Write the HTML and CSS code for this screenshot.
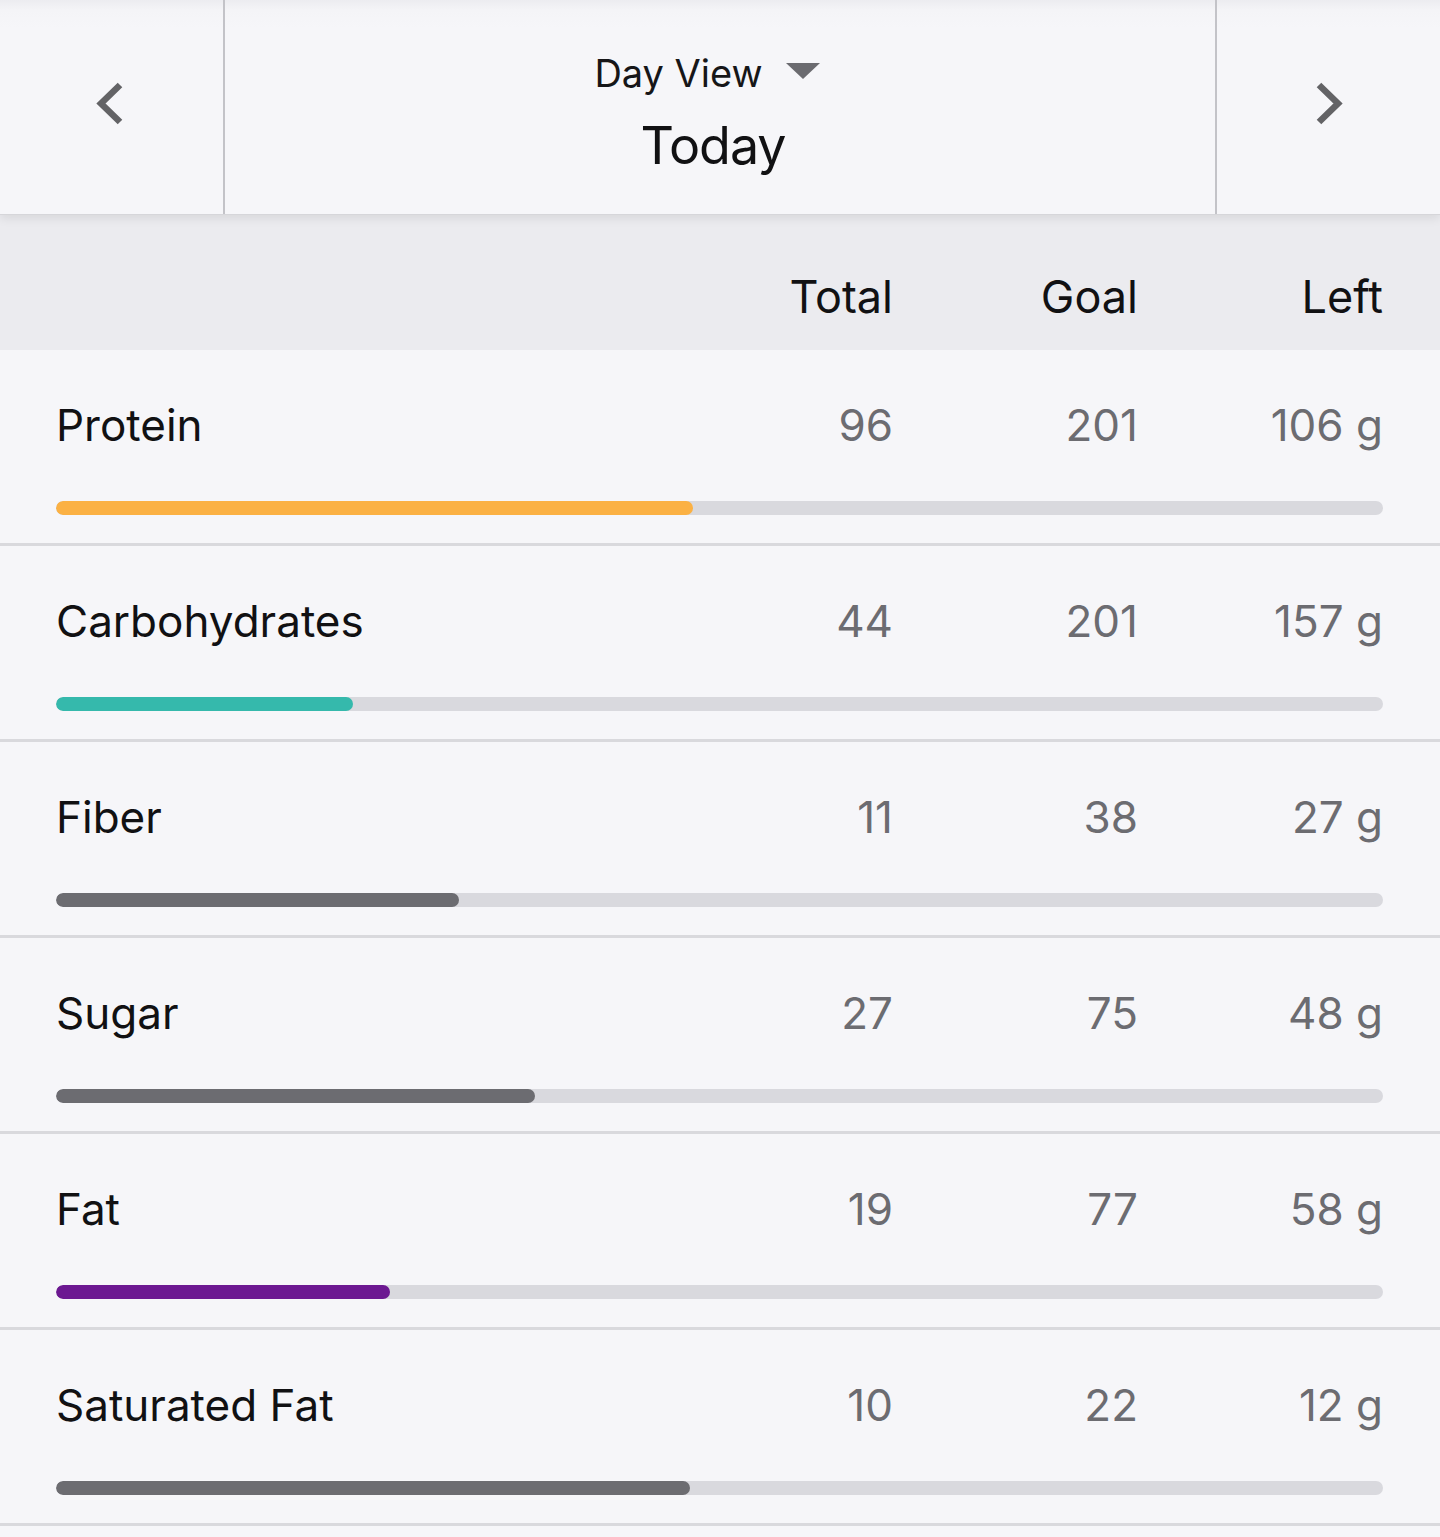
FILE: index.html
```html
<!DOCTYPE html>
<html lang="en">
<head>
<meta charset="utf-8">
<title>Nutrients</title>
<link rel="stylesheet" href="styles.css">
</head>
<body>
<div class="page">
  <header class="nav">
    <button class="nav-btn nav-prev" aria-label="Previous">
      <svg width="40" height="50" viewBox="0 0 40 50"><path d="M24 6 L5 24.5 L24 43" fill="none" stroke="#636366" stroke-width="6.5" stroke-linecap="butt" stroke-linejoin="miter"/></svg>
    </button>
    <div class="nav-center">
      <div class="view-select"><span>Day View</span><svg class="caret" width="34" height="16" viewBox="0 0 34 16"><path d="M0 0 H34 L17 16 Z" fill="#6b6b70"/></svg></div>
      <div class="nav-title">Today</div>
    </div>
    <button class="nav-btn nav-next" aria-label="Next">
      <svg width="40" height="50" viewBox="0 0 40 50"><path d="M10 6 L29 24.5 L10 43" fill="none" stroke="#636366" stroke-width="6.5" stroke-linecap="butt" stroke-linejoin="miter"/></svg>
    </button>
  </header>

  <div class="colhead">
    <span></span>
    <span class="col">Total</span>
    <span class="col">Goal</span>
    <span class="col">Left</span>
  </div>

  <section class="rows">
    <div class="row">
      <div class="line"><span class="name">Protein</span><span class="num">96</span><span class="num">201</span><span class="num">106 g</span></div>
      <div class="track"><div class="fill fill-orange" style="width:48%"></div></div>
    </div>
    <div class="row">
      <div class="line"><span class="name">Carbohydrates</span><span class="num">44</span><span class="num">201</span><span class="num">157 g</span></div>
      <div class="track"><div class="fill fill-teal" style="width:22.4%"></div></div>
    </div>
    <div class="row">
      <div class="line"><span class="name">Fiber</span><span class="num">11</span><span class="num">38</span><span class="num">27 g</span></div>
      <div class="track"><div class="fill fill-gray" style="width:30.4%"></div></div>
    </div>
    <div class="row">
      <div class="line"><span class="name">Sugar</span><span class="num">27</span><span class="num">75</span><span class="num">48 g</span></div>
      <div class="track"><div class="fill fill-gray" style="width:36.1%"></div></div>
    </div>
    <div class="row">
      <div class="line"><span class="name">Fat</span><span class="num">19</span><span class="num">77</span><span class="num">58 g</span></div>
      <div class="track"><div class="fill fill-purple" style="width:25.2%"></div></div>
    </div>
    <div class="row">
      <div class="line"><span class="name">Saturated Fat</span><span class="num">10</span><span class="num">22</span><span class="num">12 g</span></div>
      <div class="track"><div class="fill fill-gray" style="width:47.8%"></div></div>
    </div>
  </section>
</div>
</body>
</html>
```
FILE: styles.css
```css
* { box-sizing: border-box; }
html, body { margin: 0; padding: 0; }
body {
  background: #f6f6f9;
  font-family: Inter, "Noto Sans", sans-serif;
  color: #111113;
}
.page { width: 1440px; min-height: 1537px; background: #f6f6f9; }

.nav {
  display: grid;
  grid-template-columns: 225px 1fr 225px;
  height: 215px;
  background: linear-gradient(#ececf0 0, #f4f4f7 10px, #f6f6f9 28px);
  border-bottom: 1px solid #d6d6da;
  position: relative;
  z-index: 1;
  box-shadow: 0 3px 10px rgba(0,0,0,0.09);
}
.nav-btn {
  border: 0;
  background: transparent;
  padding: 0;
  margin: 0;
  display: flex;
  align-items: center;
  justify-content: center;
}
.nav-prev { border-right: 2px solid #c3c3c8; padding-left: 8px; padding-bottom: 6px; }
.nav-next { border-left: 2px solid #c3c3c8; padding-bottom: 6px; }
.nav-center {
  display: flex;
  flex-direction: column;
  align-items: center;
  padding-top: 50px;
}
.view-select {
  display: flex;
  align-items: center;
  gap: 23px;
  font-size: 38px;
  line-height: 46px;
  color: #161618;
  margin-left: -26px;
}
.caret { margin-top: -4px; }
.nav-title {
  font-size: 52px;
  line-height: 64px;
  letter-spacing: -1px;
  margin-top: 18px;
  margin-left: -14px;
  color: #111113;
}

.colhead {
  display: grid;
  grid-template-columns: 1fr 245px 245px 245px;
  padding: 0 57px 0 56px;
  height: 135px;
  background: #ebebef;
  align-items: end;
  padding-bottom: 26px;
}
.col {
  text-align: right;
  font-size: 45px;
  line-height: 54px;
  color: #111113;
}

.row {
  padding: 48px 57px 0 56px;
  height: 196px;
  border-bottom: 3px solid #d9d9dd;
}
.line {
  display: grid;
  grid-template-columns: 1fr 245px 245px 245px;
  align-items: baseline;
}
.name { font-size: 44px; line-height: 54px; color: #111113; }
.num { text-align: right; font-size: 44px; line-height: 54px; color: #6c6c71; }
.track {
  margin-top: 49px;
  height: 14px;
  border-radius: 7px;
  background: #d9d9de;
  overflow: hidden;
}
.fill { height: 100%; border-radius: 7px; }
.fill-orange { background: #fbb144; }
.fill-teal { background: #35b9ac; }
.fill-gray { background: #6c6c71; }
.fill-purple { background: #6c1891; }
```
